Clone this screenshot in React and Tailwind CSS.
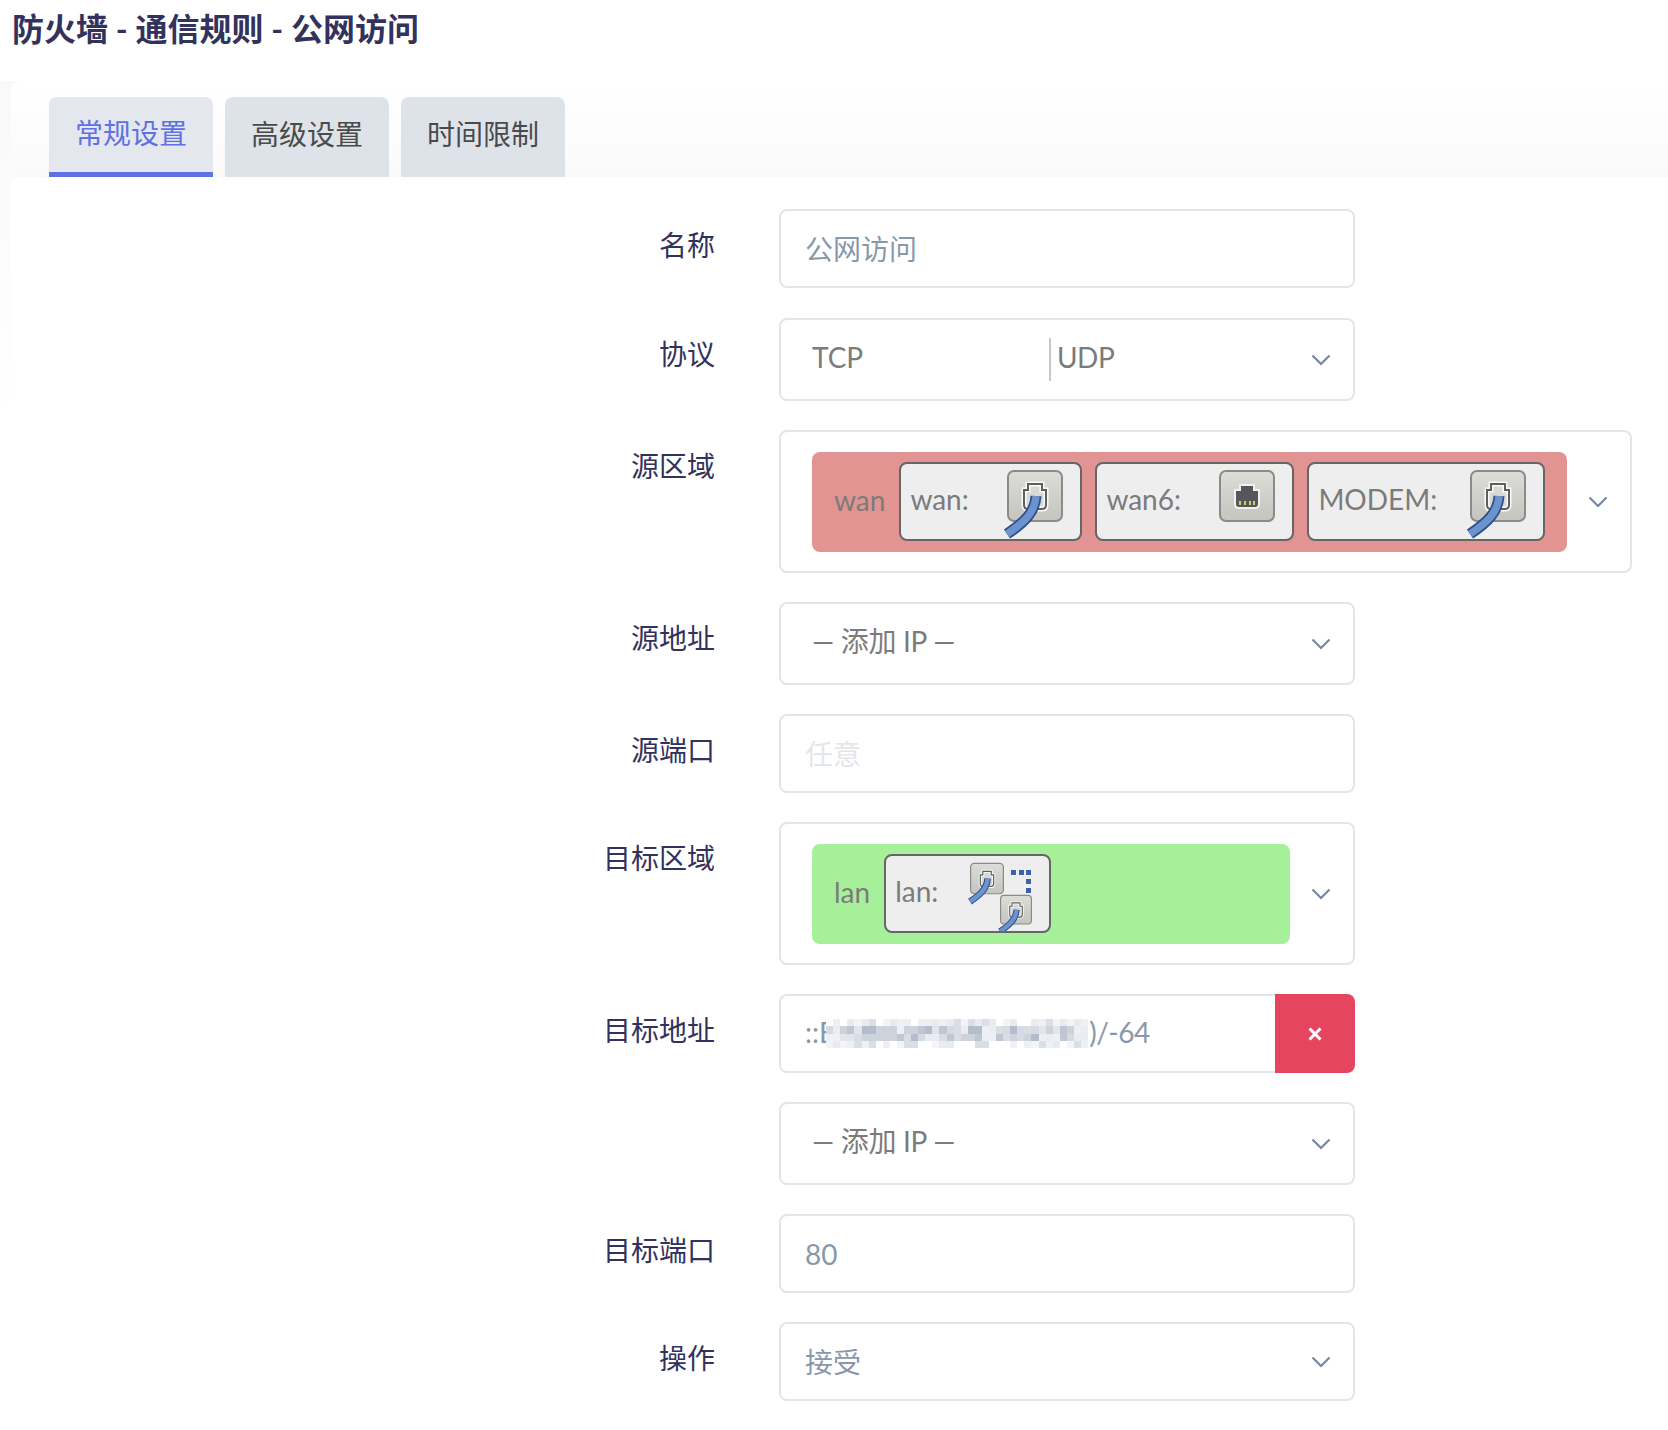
import React from 'react';

const Chevron = () => (
    <svg width="20" height="12" viewBox="0 0 20 12" fill="none" className="shrink-0">
        <path d="M1.5 1.5 L10 10 L18.5 1.5" stroke="#7488a3" strokeWidth="2.2" />
    </svg>
);

// rj45 socket tile, scaled with `size`
const Port = ({ size = 56, cable = true, dark = false }) => (
    <svg width={size} height={size + 4} viewBox="0 0 56 60" className="block overflow-visible">
        <defs>
            <linearGradient id="tile" x1="0" y1="0" x2="0" y2="1">
                <stop offset="0" stopColor="#dcdcd9" />
                <stop offset="1" stopColor="#c4c5bf" />
            </linearGradient>
        </defs>
        <rect x="1" y="1" width="54" height="50" rx="6" fill="url(#tile)" stroke="#8a8a86" strokeWidth="2" />
        {dark ? (
            <g>
                <path d="M16 20 h5 v-5 h14 v5 h5 v14 q0 4 -4 4 h-16 q-4 0 -4 -4z" fill="#55585a" stroke="#f1f1ee" strokeWidth="2" />
                <path d="M21 31 v4 M26 31 v4 M31 31 v4 M35 31 v4" stroke="#d9cc62" strokeWidth="2" />
            </g>
        ) : (
            <g>
                <path d="M17 20 h4 v-6 h14 v6 h4 v15 q0 4 -4 4 h-14 q-4 0 -4 -4z" fill="#d8d8d6" stroke="#fafaf8" strokeWidth="5" />
                <path d="M17 20 h4 v-6 h14 v6 h4 v15 q0 4 -4 4 h-14 q-4 0 -4 -4z" fill="none" stroke="#5c5f60" strokeWidth="2" />
            </g>
        )}
        {cable && (
            <g fill="none">
                <path d="M29 26 C28 42 18 52 0 64" stroke="#2f4f8f" strokeWidth="11" />
                <path d="M29 26 C28 42 18 52 0 64" stroke="#6c93cc" strokeWidth="7.5" />
            </g>
        )}
    </svg>
);

const Badge = ({ name, width, children }) => (
    <div className="relative flex h-[79px] shrink-0 items-start justify-between overflow-hidden rounded-lg border-2 border-[#666] bg-[#eeeeee] pl-[9px]" style={{ width }}>
        <span className="mt-[17px] text-[28px] leading-[36px] text-[#7b7b7b]">{name}</span>
        {children}
    </div>
);

const Field = ({ children, className = '', h = 'h-[79px]' }) => (
    <div className={`flex w-[576px] items-center rounded-lg border-2 border-[#e2e6ec] bg-white ${h} ${className}`}>
        {children}
    </div>
);

const TextField = ({ text, color = 'text-[#8898aa]' }) => (
    <Field className="pl-[24px]"><span className={`text-[28px] ${color}`}>{text}</span></Field>
);

const SelectField = ({ text }) => (
    <Field h="h-[83px]" className="justify-between pl-[31px] pr-[22px]">
        <span className="pb-[5px] text-[28px] tracking-[-0.3px] text-[#7b7b7b]">{text}</span>
        <Chevron />
    </Field>
);

const Row = ({ label, children, className = '' }) => (
    <div className={`flex items-start ${className}`}>
        <div className="flex h-[72px] w-[704px] shrink-0 items-center justify-end text-[28px] text-[#32325d]">{label}</div>
        <div className="ml-[64px]">{children}</div>
    </div>
);

// pixelated part of the address
const edge = ['#ffffff', '#f2f4f7', '#e8ebf0', '#dadee5', '#eef0f4'];
const middle = ['#eef0f4', '#d6dbe3', '#e2e5eb', '#bfc7d2', '#cdd3dc', '#e9ecf0', '#b4bdcb', '#d9dde4'];
const pick = (r, c) => {
    const n = Math.sin(c * 12.9898 + r * 78.233) * 43758.5453;
    const list = r === 0 || r === 3 ? edge : middle;
    return list[Math.floor((n - Math.floor(n)) * list.length)];
};
const mosaic = Array.from({ length: 4 }, (_, r) => Array.from({ length: 37 }, (_, c) => pick(r, c)));

const Mosaic = () => (
    <span className="relative -ml-[9px] mr-[1px] flex h-[29px] w-[262px] flex-col overflow-hidden blur-[0.4px]">
        {mosaic.map((cells, r) => (
            <span key={r} className="flex h-[7px] flex-1">
                {cells.map((shade, c) => (
                    <span key={c} className="flex-1" style={{ backgroundColor: shade }} />
                ))}
            </span>
        ))}
    </span>
);

const tabs = ['常规设置', '高级设置', '时间限制'];

const App = () => {
    return (
        <div className="flex h-[1430px] flex-col overflow-hidden bg-white font-['Lato','Noto_Sans_CJK_SC',sans-serif]">
            <h1 className="flex h-[81px] shrink-0 items-start pl-[12px] pt-[8px] text-[32px] font-bold leading-[42px] text-[#32325d]">防火墙 - 通信规则 - 公网访问</h1>

            <div className="flex flex-1 flex-col bg-gradient-to-b from-[#f9f9fa] to-white to-[25%] pl-[11px]">
                <div className="flex h-[96px] shrink-0 items-end gap-[12px] rounded-tl-lg bg-gradient-to-b from-white to-[#fafafb] pl-[38px]">
                    {tabs.map((tab, i) => (
                        <div
                            key={tab}
                            className={`flex h-[80px] w-[164px] items-center justify-center rounded-t-lg text-[28px] ${i === 0 ? 'border-b-[5px] border-[#5e72e4] bg-[#e4e7ed] pb-[3px] text-[#5e72e4]' : 'bg-[#dee2e9] pb-[6px] text-[#4a4a4a]'}`}
                        >
                            {tab}
                        </div>
                    ))}
                </div>

                <div className="flex flex-1 flex-col gap-[29px] rounded-tl-lg bg-white pt-[32px]">
                    <Row label="名称" className="mb-[1px]"><TextField text="公网访问" /></Row>

                    <Row label="协议">
                        <Field h="h-[83px]" className="pl-[31px] pr-[22px]">
                            <span className="w-[237px] pb-[5px] text-[28px] text-[#7b7b7b]">TCP</span>
                            <span className="h-[43px] w-[2px] bg-[#c8c8c8]" />
                            <span className="ml-[6px] flex-1 pb-[5px] text-[28px] tracking-[-0.5px] text-[#7b7b7b]">UDP</span>
                            <Chevron />
                        </Field>
                    </Row>

                    <Row label="源区域">
                        <div className="flex h-[143px] w-[853px] items-center justify-between rounded-lg border-2 border-[#e2e6ec] bg-white pl-[31px] pr-[22px]">
                            <div className="flex h-[100px] w-[755px] items-center rounded-lg bg-[#e29492] pl-[22px]">
                                <span className="mr-[14px] pb-[4px] text-[28px] text-[#7b7b7b]">wan</span>
                                <div className="flex gap-[13px]">
                                    <Badge name="wan:" width={183}><div className="mr-[17px] mt-[6px]"><Port /></div></Badge>
                                    <Badge name="wan6:" width={199}><div className="mr-[17px] mt-[6px]"><Port cable={false} dark /></div></Badge>
                                    <Badge name="MODEM:" width={238}><div className="mr-[17px] mt-[6px]"><Port /></div></Badge>
                                </div>
                            </div>
                            <Chevron />
                        </div>
                    </Row>

                    <Row label="源地址"><SelectField text="— 添加 IP —" /></Row>
                    <Row label="源端口"><TextField text="任意" color="text-[#e3e6ea]" /></Row>

                    <Row label="目标区域">
                        <div className="flex h-[143px] w-[576px] items-center justify-between rounded-lg border-2 border-[#e2e6ec] bg-white pl-[31px] pr-[22px]">
                            <div className="flex h-[100px] w-[478px] items-center rounded-lg bg-[#a7f09a] pl-[22px]">
                                <span className="mr-[14px] pb-[4px] text-[28px] text-[#7b7b7b]">lan</span>
                                <Badge name="lan:" width={167}>
                                    <div className="mr-[17px] flex items-start">
                                        <div className="mt-[6px]"><Port size={34} /></div>
                                        <div className="-ml-[4px] mt-[38px]"><Port size={32} /></div>
                                        <svg width="20" height="26" viewBox="0 0 20 26" className="absolute right-[18px] top-[14px]">
                                            <path d="M0 0h5v5h-5zM8 0h5v5h-5zM15 0h5v5h-5zM15 9h5v5h-5zM15 18h5v5h-5z" fill="#3d62a8" />
                                        </svg>
                                    </div>
                                </Badge>
                            </div>
                            <Chevron />
                        </div>
                    </Row>

                    <Row label="目标地址">
                        <div className="flex h-[79px] w-[576px]">
                            <div className="flex flex-1 items-center rounded-l-lg border-2 border-r-0 border-[#e2e6ec] bg-white pl-[24px] text-[28px] text-[#8898aa]">
                                <span className="pb-[3px]">::E</span>
                                <Mosaic />
                                <span className="pb-[3px] tracking-[-0.5px]">)/-64</span>
                            </div>
                            <div className="flex w-[80px] items-center justify-center rounded-r-lg bg-[#e64560]">
                                <svg width="14" height="14" viewBox="0 0 14 14"><path d="M1.5 1.5 L12.5 12.5 M12.5 1.5 L1.5 12.5" stroke="#fff" strokeWidth="3" /></svg>
                            </div>
                        </div>
                    </Row>

                    <Row label=""><SelectField text="— 添加 IP —" /></Row>
                    <Row label="目标端口"><TextField text="80" /></Row>
                    <Row label="操作">
                        <Field className="justify-between pl-[24px] pr-[22px]">
                            <span className="text-[28px] text-[#8898aa]">接受</span>
                            <Chevron />
                        </Field>
                    </Row>
                </div>
            </div>
        </div>
    );
};

export default App;
